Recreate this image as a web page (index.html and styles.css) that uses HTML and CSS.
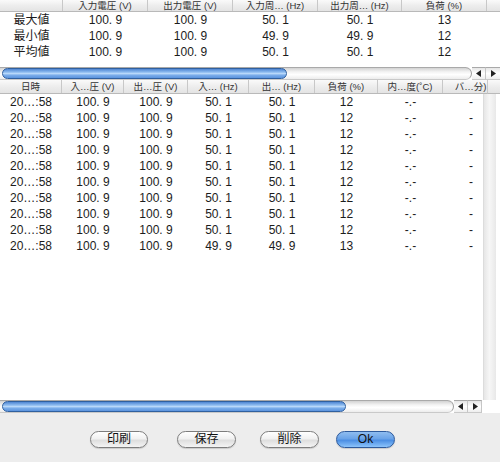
FILE: index.html
```html
<!DOCTYPE html>
<html lang="ja">
<head>
<meta charset="utf-8">
<title>Log</title>
<link rel="stylesheet" href="styles.css">
</head>
<body>
<div class="window">
  <section class="summary">
    <div class="grid top-grid head">
      <div class="th"></div>
      <div class="th">入力電圧 (V)</div>
      <div class="th">出力電圧 (V)</div>
      <div class="th">入力周… (Hz)</div>
      <div class="th">出力周… (Hz)</div>
      <div class="th">負荷 (%)</div>
      <div class="th last"></div>
    </div>
    <div class="grid top-grid row">
      <div>最大値</div><div>100. 9</div><div>100. 9</div><div>50. 1</div><div>50. 1</div><div>13</div><div></div>
    </div>
    <div class="grid top-grid row">
      <div>最小値</div><div>100. 9</div><div>100. 9</div><div>49. 9</div><div>49. 9</div><div>12</div><div></div>
    </div>
    <div class="grid top-grid row">
      <div>平均値</div><div>100. 9</div><div>100. 9</div><div>50. 1</div><div>50. 1</div><div>12</div><div></div>
    </div>
    <div class="spacer"></div>
    <div class="hscroll">
      <div class="track"><div class="thumb thumb-top"></div></div>
      <div class="arrow"><svg width="6" height="7" viewBox="0 0 6 7"><polygon points="5,0 5,7 0,3.5" fill="#222"/></svg></div>
      <div class="arrow"><svg width="6" height="7" viewBox="0 0 6 7"><polygon points="1,0 1,7 6,3.5" fill="#222"/></svg></div>
    </div>
  </section>

  <section class="log">
    <div class="log-head">
      <div class="clip head-clip">
        <div class="grid log-grid head">
          <div class="th">日時</div>
          <div class="th">入…圧 (V)</div>
          <div class="th">出…圧 (V)</div>
          <div class="th">入… (Hz)</div>
          <div class="th">出… (Hz)</div>
          <div class="th">負荷 (%)</div>
          <div class="th">内…度(˚C)</div>
          <div class="th">バ…分)</div>
        </div>
      </div>
      <div class="head-corner"></div>
    </div>
    <div class="log-body">
      <div class="clip rows">
        <div class="grid log-grid row"><div>20…:58</div><div>100. 9</div><div>100. 9</div><div>50. 1</div><div>50. 1</div><div>12</div><div>-.-</div><div>-</div></div>
        <div class="grid log-grid row"><div>20…:58</div><div>100. 9</div><div>100. 9</div><div>50. 1</div><div>50. 1</div><div>12</div><div>-.-</div><div>-</div></div>
        <div class="grid log-grid row"><div>20…:58</div><div>100. 9</div><div>100. 9</div><div>50. 1</div><div>50. 1</div><div>12</div><div>-.-</div><div>-</div></div>
        <div class="grid log-grid row"><div>20…:58</div><div>100. 9</div><div>100. 9</div><div>50. 1</div><div>50. 1</div><div>12</div><div>-.-</div><div>-</div></div>
        <div class="grid log-grid row"><div>20…:58</div><div>100. 9</div><div>100. 9</div><div>50. 1</div><div>50. 1</div><div>12</div><div>-.-</div><div>-</div></div>
        <div class="grid log-grid row"><div>20…:58</div><div>100. 9</div><div>100. 9</div><div>50. 1</div><div>50. 1</div><div>12</div><div>-.-</div><div>-</div></div>
        <div class="grid log-grid row"><div>20…:58</div><div>100. 9</div><div>100. 9</div><div>50. 1</div><div>50. 1</div><div>12</div><div>-.-</div><div>-</div></div>
        <div class="grid log-grid row"><div>20…:58</div><div>100. 9</div><div>100. 9</div><div>50. 1</div><div>50. 1</div><div>12</div><div>-.-</div><div>-</div></div>
        <div class="grid log-grid row"><div>20…:58</div><div>100. 9</div><div>100. 9</div><div>50. 1</div><div>50. 1</div><div>12</div><div>-.-</div><div>-</div></div>
        <div class="grid log-grid row"><div>20…:58</div><div>100. 9</div><div>100. 9</div><div>49. 9</div><div>49. 9</div><div>13</div><div>-.-</div><div>-</div></div>
      </div>
      <div class="vscroll"></div>
      <div class="vpad"></div>
    </div>
    <div class="hscroll bottom">
      <div class="track"><div class="thumb thumb-bottom"></div></div>
      <div class="arrow"><svg width="6" height="7" viewBox="0 0 6 7"><polygon points="5,0 5,7 0,3.5" fill="#222"/></svg></div>
      <div class="arrow"><svg width="6" height="7" viewBox="0 0 6 7"><polygon points="1,0 1,7 6,3.5" fill="#222"/></svg></div>
      <div class="corner"></div>
    </div>
  </section>

  <div class="buttons">
    <button class="btn b-print">印刷</button>
    <button class="btn b-save">保存</button>
    <button class="btn b-del">削除</button>
    <button class="btn b-ok">Ok</button>
  </div>
</div>
</body>
</html>
```

FILE: styles.css
```css
* { box-sizing: border-box; }
html, body { margin: 0; padding: 0; }
body {
  width: 500px;
  height: 462px;
  overflow: hidden;
  background: #ededed;
  font-family: "Liberation Sans", "Noto Sans CJK JP", sans-serif;
  color: #1c1c1c;
}
.window { display: flex; flex-direction: column; height: 462px; }

.summary { background: #fff; display: flex; flex-direction: column; }
.grid { display: grid; }
.top-grid { grid-template-columns: 63px 85px 85px 85px 84px 85px 1fr; }
.log-grid { grid-template-columns: 62px 62px 64px 61px 66px 63px 65px 56px; width: 499px; }

.head {
  background: linear-gradient(#fafafa, #ececec 55%, #e4e4e4);
  border-bottom: 1px solid #b9b9b9;
  font-size: 9.5px;
  color: #333;
}
.summary .head { height: 12px; line-height: 11px; }
.th {
  text-align: center;
  border-right: 1px solid #c8c8c8;
  white-space: nowrap;
  overflow: hidden;
}
.th.last { border-right: none; }

.row { height: 16px; line-height: 16px; font-size: 12px; }
.row > div { text-align: center; white-space: nowrap; overflow: hidden; }

.spacer { height: 7px; }

.hscroll { display: flex; height: 13px; background: #fff; }
.track {
  flex: 1;
  position: relative;
  border-top: 1px solid #a9a9a9;
  border-bottom: 1px solid #c9c9c9;
  border-right: 1px solid #9a9a9a;
  border-radius: 0 7px 7px 0;
  background: linear-gradient(#d2d2d2, #f3f3f3 35%, #ffffff 60%, #ececec);
}
.thumb {
  position: absolute;
  left: 2px;
  top: 0;
  height: 11px;
  border: 1px solid #30609f;
  border-radius: 6px;
  background: linear-gradient(#4f86d3, #8dbbef 35%, #b8d8fa 50%, #79acea 70%, #5b93dd);
}
.thumb-top { width: 285px; }
.thumb-bottom { width: 344px; }
.arrow {
  width: 14px;
  display: flex;
  align-items: center;
  justify-content: center;
  border-top: 1px solid #a9a9a9;
  border-bottom: 1px solid #c9c9c9;
  border-right: 1px solid #c6c6c6;
  background: linear-gradient(#e6e6e6, #ffffff 50%, #eeeeee);
}
.arrow:last-of-type { border-right: none; }
.hscroll.bottom .arrow:last-of-type { border-right: 1px solid #c6c6c6; }
.corner { width: 18px; background: #fff; }

.log { display: flex; flex-direction: column; background: #fff; }
.log-head { display: flex; height: 14px; }
.log-head .head { height: 14px; line-height: 13px; }
.clip { width: 483px; overflow: hidden; }
.head-clip { width: 487px; }
.head-corner {
  flex: 1;
  background: linear-gradient(#fafafa, #ececec 55%, #e4e4e4);
  border-bottom: 1px solid #b9b9b9;
  border-left: 1px solid #c8c8c8;
}
.log-body { display: flex; height: 306px; }
.vscroll {
  width: 13px;
  border-left: 1px solid #dcdcdc;
  background: linear-gradient(to right, #e6e6e6, #f6f6f6 45%, #f3f3f3 60%, #e8e8e8);
}
.vpad { flex: 1; background: #fff; }

.buttons {
  display: flex;
  align-items: center;
  padding: 18px 0 0 90px;
}
.btn {
  height: 17px;
  padding: 0;
  font-family: "Liberation Sans", "Noto Sans CJK JP", sans-serif;
  font-size: 12px;
  line-height: 15px;
  color: #111;
  border: 1px solid #7d7d7d;
  border-radius: 9px;
  background: linear-gradient(#ffffff, #f1f1f1 45%, #dedede 55%, #f4f4f4);
  box-shadow: 0 1px 1px rgba(0,0,0,0.15);
}
.b-print { width: 58px; }
.b-save { width: 59px; margin-left: 29px; }
.b-del { width: 59px; margin-left: 24px; }
.b-ok {
  width: 59px;
  margin-left: 17px;
  border-color: #2d5a9c;
  background: linear-gradient(#8fbdf0, #6aa3e8 45%, #4b8ee3 55%, #8cc4fb);
}
```
